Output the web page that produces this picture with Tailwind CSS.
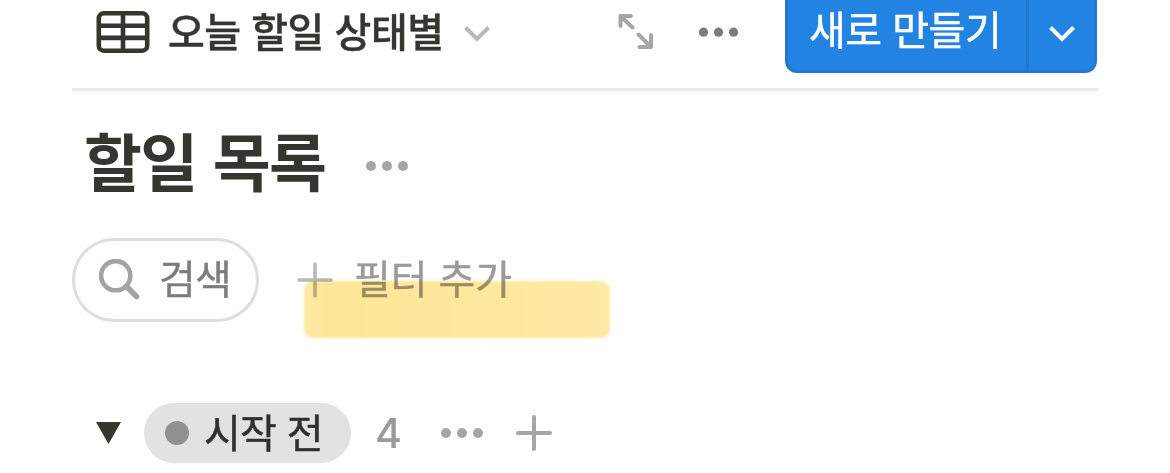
<!DOCTYPE html>
<html lang="ko">
<head>
<meta charset="utf-8">
<title>할일 목록</title>
<script src="https://cdn.jsdelivr.net/npm/@tailwindcss/browser@4"></script>
</head>
<body class="w-[1170px] h-[473px] overflow-hidden bg-[#fefefe] text-[#37352f] font-['Noto_Sans_CJK_KR','Liberation_Sans',sans-serif]">
<main class="ml-[72px] w-[1026px] whitespace-nowrap">
  <header class="flex h-[91px] items-start border-b-3 border-[#e9e9e8]">
    <div class="flex h-[64px] items-center">
      <svg class="ml-6 w-[54px] h-[43px]" viewBox="0 0 54 43" fill="none" stroke="#37352f" stroke-width="4.6"><rect x="2.8" y="2.3" width="48.4" height="37.4" rx="5"/><path d="M27 2v38M2 14.700h50M2 26.900h50"/></svg>
      <h2 class="ml-[18px] w-[296px] pb-[4px] text-[40px] leading-[60px] font-medium tracking-[-0.5px] [-webkit-text-stroke:0.4px]">오늘 할일 상태별</h2>
      <svg class="mt-[3px] w-[26px] h-[18px]" viewBox="0 0 26 18" fill="none" stroke="#b9b9b7" stroke-width="4"><path d="M1.5 2.5 13 14 24.500 2.500"/></svg>
    </div>
    <div class="ml-[128px] flex h-[64px] items-center">
      <svg class="w-[36px] h-[36px]" viewBox="0 0 36 36" fill="none" stroke="#a7a6a2" stroke-width="4" stroke-linecap="round" stroke-linejoin="round"><path d="M2.500 12V2H13M2.500 2 14.500 13.500M33 21V33H21.500M33 33 20.500 20.500"/></svg>
      <svg class="ml-[45px] w-[40px] h-[10px]" viewBox="0 0 40 10" fill="#7d7c78"><circle cx="4.500" cy="5.200" r="4.600"/><circle cx="19.500" cy="5.200" r="4.600"/><circle cx="34.500" cy="5.200" r="4.600"/></svg>
    </div>
    <div class="ml-[46px] flex h-[73px] w-[312px] rounded-b-[12px] border-x-3 border-b-3 border-[#2277cf] bg-[#2383e2] text-white">
      <button class="w-[241px] border-r-3 border-[#2277cf] pl-[21px] pb-[20px] text-left text-[40px] leading-[56px] tracking-[-0.5px] [-webkit-text-stroke:0.5px]">새로 만들기</button>
      <button class="flex flex-1 justify-center pt-[25px]"><svg class="w-[26px] h-[18px]" viewBox="0 0 26 18" fill="none" stroke="white" stroke-width="4"><path d="M1.500 2.500 13 14 24.500 2.500"/></svg></button>
    </div>
  </header>
  <section>
    <div class="flex h-[147px] items-center pl-[12px]">
      <h1 class="w-[281px] pb-[12px] text-[63px] leading-[90px] font-bold tracking-[-1.600px]">할일 목록</h1>
      <svg class="w-[44px] h-[12px]" viewBox="0 0 44 12" fill="#a7a6a2"><circle cx="6" cy="7" r="5"/><circle cx="22" cy="7" r="5"/><circle cx="38" cy="7" r="5"/></svg>
    </div>
    <div class="flex h-[84px] items-center">
      <div class="flex h-[84px] w-[187px] items-center rounded-full border-3 border-[#dededd] pl-[23px] text-[#7d7c78]">
        <svg class="w-[42px] h-[42px]" viewBox="0 0 42 42" fill="none" stroke="#a4a39f" stroke-width="4.600"><circle cx="17.700" cy="16.700" r="14.600"/><path d="M28.500 27.500 38.500 37.500" stroke-width="5.600" stroke-linecap="round"/></svg>
        <span class="ml-[19px] pb-[7px] text-[40px] leading-[60px] tracking-[-0.8px] [-webkit-text-stroke:0.4px]">검색</span>
      </div>
      <div class="relative ml-[38px] flex h-[84px] items-center text-[#9b9a97]">
        <svg class="w-[36px] h-[36px]" viewBox="0 0 36 36" fill="none" stroke="#b9b9b7" stroke-width="3.600" stroke-linecap="round"><path d="M18 2v32M2 18h32"/></svg>
        <span class="ml-[21px] pb-[6px] text-[40px] leading-[60px] tracking-[-0.1px] [-webkit-text-stroke:0.4px]">필터 추가</span>
        <div class="absolute left-[7px] top-[43px] h-[57px] w-[306px] rounded-[9px] bg-linear-to-r from-[#ffeaa6] via-[#ffe799] via-8% to-[#ffeba6] mix-blend-multiply blur-[1px]"></div>
      </div>
    </div>
    <div class="mt-[81px] flex h-[60px] items-center">
      <svg class="ml-[24px] w-[25px] h-[22px]" viewBox="0 0 25 22" fill="#37352f"><path d="M0 0h25L12.500 22z"/></svg>
      <div class="ml-[23px] flex h-[60px] w-[207px] items-center rounded-full bg-[#e3e2e0] pl-[21px]">
        <i class="size-[24px] rounded-full bg-[#91918e]"></i>
        <span class="ml-[15px] pb-[5px] text-[40px] leading-[60px] text-[#32302c] tracking-[-0.7px] [-webkit-text-stroke:0.5px]">시작 전</span>
      </div>
      <span class="ml-[24px] w-[65px] font-['Inter','Liberation_Sans',sans-serif] text-[41px] leading-[60px] font-medium text-[#9b9a97]">4</span>
      <svg class="w-[44px] h-[12px]" viewBox="0 0 44 12" fill="#a7a6a2"><circle cx="6" cy="6" r="5"/><circle cx="22" cy="6" r="5"/><circle cx="38" cy="6" r="5"/></svg>
      <svg class="ml-[32px] w-[36px] h-[36px]" viewBox="0 0 36 36" fill="none" stroke="#a7a6a2" stroke-width="4" stroke-linecap="round"><path d="M18 2v32M2 18h32"/></svg>
    </div>
  </section>
</main>
</body>
</html>
